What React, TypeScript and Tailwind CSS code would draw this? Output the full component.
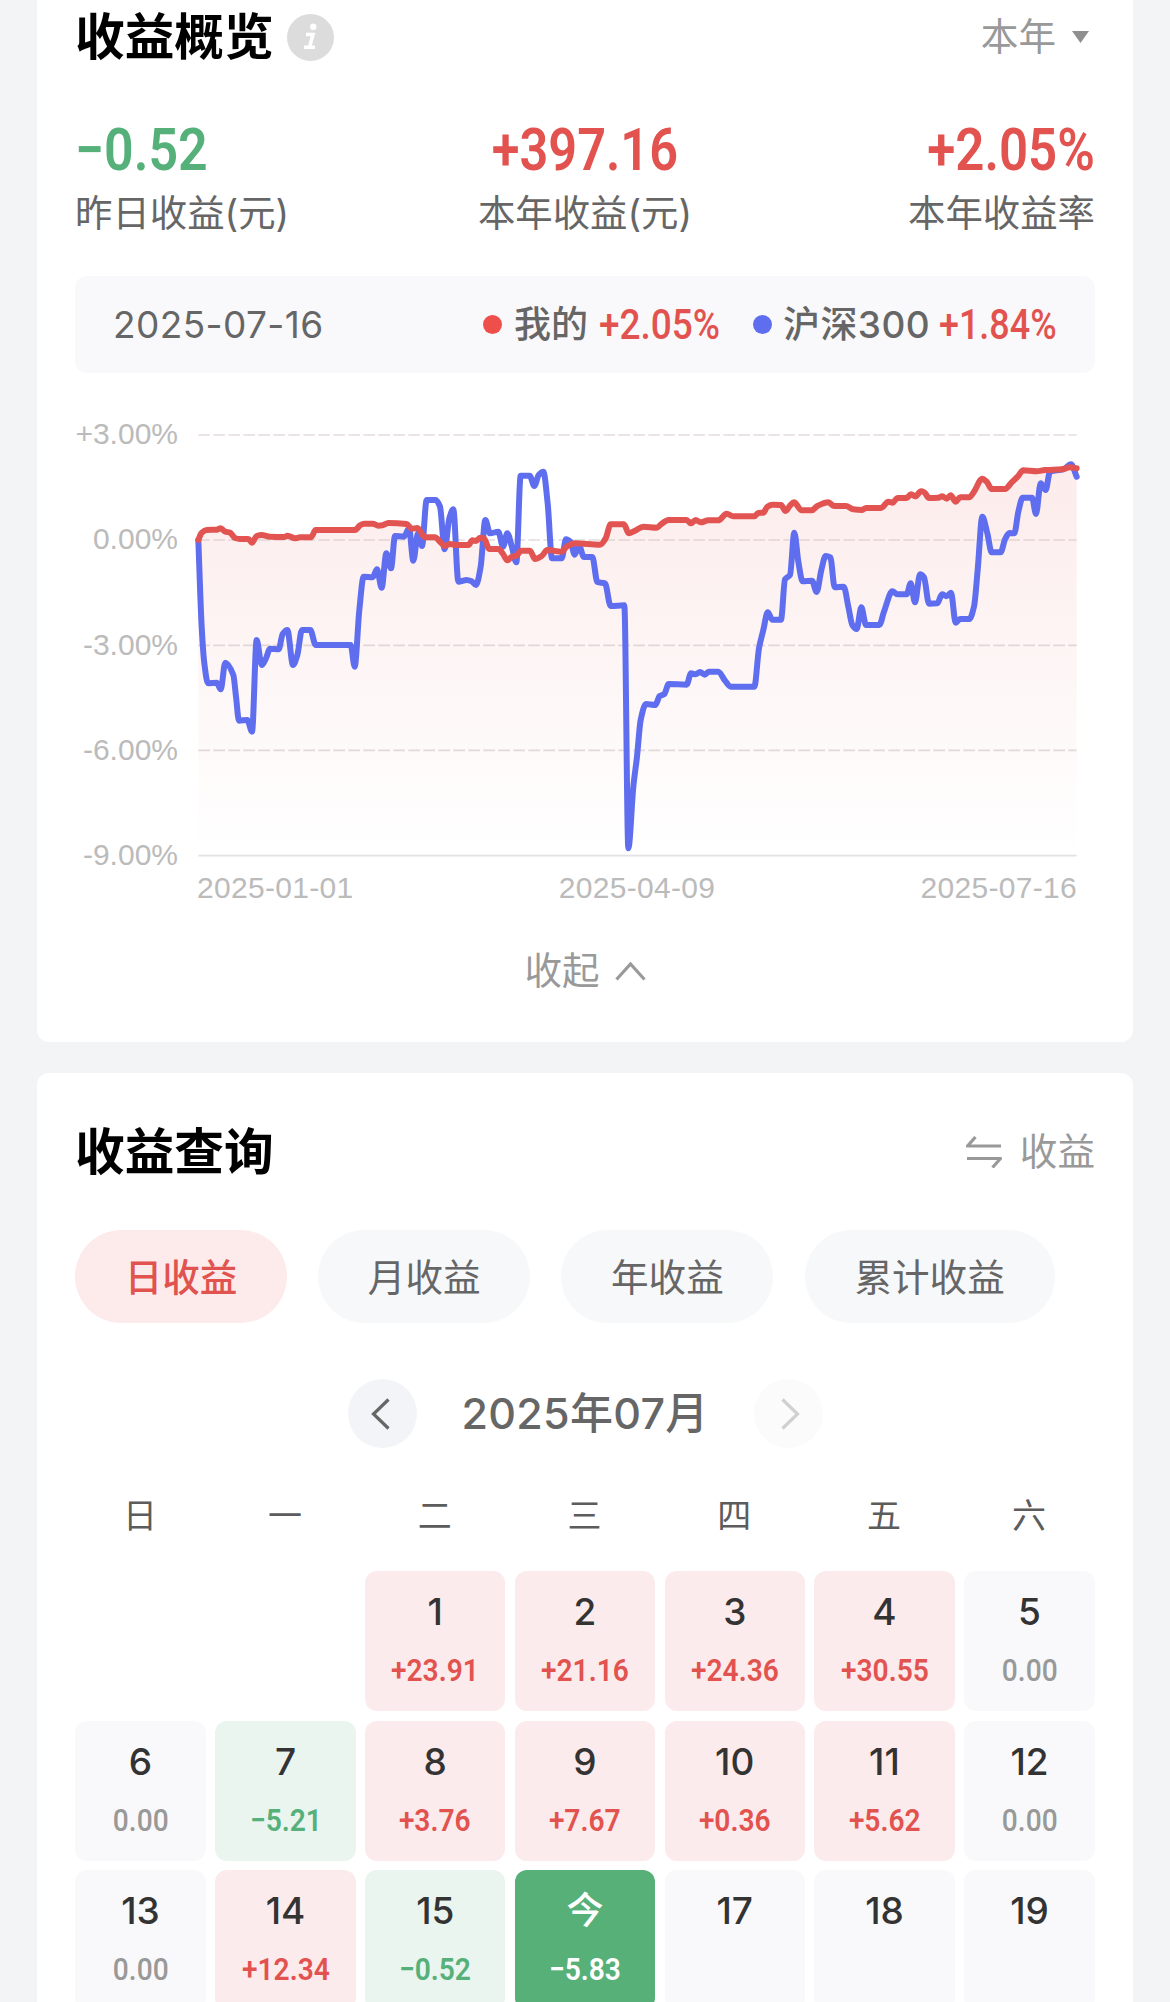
import clsx from 'clsx';

type Point = [number, number];

interface DayCell {
  label: string;
  amount?: string;
  today?: boolean;
}

const BENCHMARK: Point[] = [
  [415, 390], [425, 650], [433, 760], [444, 820], [470, 818], [482, 838], [496, 758], [520, 795], [528, 860], [537, 932],
  [562, 930], [576, 965], [590, 690], [605, 765], [618, 745], [630, 716], [656, 718], [668, 672], [682, 660], [699, 765],
  [712, 735], [726, 660], [751, 660], [767, 705], [872, 705], [884, 770], [898, 600], [911, 500], [938, 502], [951, 478],
  [965, 533], [979, 430], [993, 475], [1005, 378], [1032, 380], [1047, 355], [1060, 452], [1074, 370], [1086, 408],
  [1100, 270], [1127, 270], [1140, 290], [1154, 418], [1168, 325], [1180, 298], [1195, 515], [1220, 510], [1235, 514],
  [1248, 525], [1262, 470], [1276, 330], [1290, 370], [1315, 365], [1329, 410], [1342, 370], [1355, 408], [1369, 457],
  [1382, 197], [1409, 197], [1423, 228], [1436, 195], [1450, 185], [1463, 280], [1476, 445], [1505, 445], [1518, 388],
  [1532, 396], [1544, 434], [1557, 408], [1572, 441], [1597, 441], [1612, 516], [1635, 520], [1652, 588], [1693, 586],
  [1705, 1315], [1720, 1130], [1731, 1040], [1742, 930], [1758, 882], [1786, 885], [1799, 858], [1813, 852], [1826, 822],
  [1880, 824], [1893, 790], [1907, 793], [1920, 786], [1934, 794], [1947, 785], [1975, 785], [1995, 812], [2012, 830],
  [2083, 830], [2097, 715], [2110, 660], [2123, 607], [2137, 629], [2163, 629], [2175, 508], [2190, 495], [2203, 368],
  [2215, 455], [2228, 514], [2256, 512], [2270, 546], [2284, 480], [2297, 438], [2311, 442], [2324, 532], [2351, 530],
  [2365, 590], [2377, 645], [2390, 657], [2404, 592], [2418, 645], [2458, 645], [2472, 605], [2497, 544], [2512, 553],
  [2540, 553], [2552, 520], [2565, 577], [2580, 493], [2592, 502], [2607, 581], [2632, 580], [2646, 553], [2660, 559],
  [2673, 548], [2687, 638], [2700, 627], [2728, 627], [2742, 590], [2753, 480], [2767, 320], [2782, 370], [2795, 427],
  [2822, 427], [2835, 388], [2848, 369], [2863, 370], [2875, 305], [2888, 263], [2916, 263], [2928, 312], [2942, 220],
  [2957, 240], [2970, 185], [3010, 178], [3033, 163], [3050, 200],
];

const MINE: Point[] = [
  [415, 390], [425, 368], [440, 360], [470, 359], [482, 355], [496, 365], [510, 368], [525, 384], [540, 387], [565, 387],
  [576, 398], [590, 378], [605, 375], [630, 380], [672, 381], [683, 377], [705, 385], [720, 382], [753, 382], [767, 360],
  [885, 360], [900, 346], [912, 341], [938, 341], [955, 347], [967, 346], [985, 339], [1040, 342], [1055, 356],
  [1072, 354], [1095, 382], [1125, 382], [1140, 395], [1154, 408], [1170, 402], [1190, 405], [1225, 405], [1237, 391],
  [1248, 393], [1260, 383], [1272, 385], [1288, 417], [1315, 417], [1328, 430], [1342, 451], [1356, 440], [1370, 437],
  [1383, 422], [1410, 422], [1425, 447], [1445, 438], [1462, 420], [1505, 425], [1520, 410], [1545, 400], [1620, 404],
  [1637, 385], [1652, 343], [1692, 343], [1706, 370], [1725, 362], [1750, 350], [1790, 353], [1805, 341], [1826, 330],
  [1880, 330], [1893, 340], [1907, 330], [1922, 337], [1945, 331], [1975, 331], [2000, 311], [2020, 319], [2083, 319],
  [2095, 309], [2110, 308], [2122, 290], [2137, 284], [2163, 285], [2177, 303], [2190, 287], [2202, 277], [2225, 301],
  [2255, 301], [2272, 288], [2305, 277], [2323, 288], [2358, 288], [2380, 298], [2405, 300], [2418, 294], [2463, 294],
  [2485, 275], [2498, 278], [2512, 264], [2540, 264], [2553, 253], [2566, 259], [2583, 244], [2593, 247], [2607, 264],
  [2635, 263], [2647, 259], [2660, 266], [2672, 256], [2687, 275], [2700, 262], [2728, 262], [2742, 245], [2767, 206],
  [2780, 215], [2795, 237], [2835, 237], [2855, 217], [2873, 200], [2890, 181], [2930, 184], [2955, 180], [3005, 178],
  [3030, 172], [3050, 175],
];

// Cubic path that never overshoots between two neighbouring points
function monotonePath(points: Point[]) {
  const slopes = points.slice(1).map((p, i) => (p[1] - points[i][1]) / (p[0] - points[i][0]));
  const tangents = points.map((_, i) => {
    const a = slopes[i - 1];
    const b = slopes[i];
    if (a === undefined) return b;
    if (b === undefined) return a;
    return a * b <= 0 ? 0 : (2 * a * b) / (a + b);
  });
  return points.slice(1).reduce((d, [x, y], i) => {
    const [px, py] = points[i];
    const dx = (x - px) / 3;
    return `${d} C${px + dx},${py + tangents[i] * dx} ${x - dx},${y - tangents[i + 1] * dx} ${x},${y}`;
  }, `M${points[0][0]},${points[0][1]}`);
}

const Y_LABELS = ['+3.00%', '0.00%', '-3.00%', '-6.00%', '-9.00%'];
const GRID_LINES = [75, 390, 706, 1021];
const BASELINE = 1337;

const TABS = ['日收益', '月收益', '年收益', '累计收益'];
const WEEKDAYS = ['日', '一', '二', '三', '四', '五', '六'];

const DAYS: (DayCell | null)[] = [
  null,
  null,
  { label: '1', amount: '+23.91' },
  { label: '2', amount: '+21.16' },
  { label: '3', amount: '+24.36' },
  { label: '4', amount: '+30.55' },
  { label: '5', amount: '0.00' },
  { label: '6', amount: '0.00' },
  { label: '7', amount: '−5.21' },
  { label: '8', amount: '+3.76' },
  { label: '9', amount: '+7.67' },
  { label: '10', amount: '+0.36' },
  { label: '11', amount: '+5.62' },
  { label: '12', amount: '0.00' },
  { label: '13', amount: '0.00' },
  { label: '14', amount: '+12.34' },
  { label: '15', amount: '−0.52' },
  { label: '今', amount: '−5.83', today: true },
  { label: '17' },
  { label: '18' },
  { label: '19' },
];

function ProfitChart() {
  const line = monotonePath(MINE);
  return (
    <div>
      <div className="flex h-[451px] gap-3 font-['Liberation_Sans',sans-serif] text-[30px] text-[#bbbbbb]">
        <div className="flex w-[103px] flex-col justify-between text-right leading-[30px]">
          {Y_LABELS.map((label) => (
            <span key={label}>{label}</span>
          ))}
        </div>
        <svg className="h-[451px] w-[904px]" viewBox="390 27 2712 1353" fill="none">
          <defs>
            <linearGradient id="area" x1="0" y1="175" x2="0" y2={BASELINE} gradientUnits="userSpaceOnUse">
              <stop offset="0" stopColor="#e5504c" stopOpacity="0.11" />
              <stop offset="0.45" stopColor="#e5504c" stopOpacity="0.06" />
              <stop offset="1" stopColor="#e5504c" stopOpacity="0" />
            </linearGradient>
          </defs>
          <path d={`${line} V${BASELINE} H415 Z`} fill="url(#area)" />
          {GRID_LINES.map((y) => (
            <path key={y} d={`M415 ${y}H3050`} stroke="#c8b8bc" strokeOpacity="0.5" strokeWidth="5" strokeDasharray="35 10" />
          ))}
          <path d={`M415 ${BASELINE}H3050`} stroke="#e2e2e4" strokeWidth="5" />
          <g strokeWidth="18" strokeLinejoin="round" strokeLinecap="round">
            <path d={monotonePath(BENCHMARK)} stroke="#5f6eee" />
            <path d={line} stroke="#e25452" />
          </g>
        </svg>
      </div>
      <div className="mt-[1px] flex justify-between pr-[18px] pl-[122px] font-['Liberation_Sans',sans-serif] text-[30px] leading-[34px] tracking-[0.3px] text-[#bbbbbb]">
        <span>2025-01-01</span>
        <span>2025-04-09</span>
        <span>2025-07-16</span>
      </div>
    </div>
  );
}

function Overview() {
  return (
    <section className="h-[1042px] rounded-b-xl bg-white px-[38px]">
      <div className="flex h-[74px] items-center justify-between">
        <div className="flex items-center gap-[13px]">
          <h1 className="text-[49.7px] leading-[70px] font-bold text-black">收益概览</h1>
          <svg className="size-[47px]" viewBox="0 0 47 47">
            <circle cx="23.5" cy="23.5" r="23.5" fill="#dcdcdc" />
            <circle cx="26.3" cy="12.8" r="3.2" fill="#fff" />
            <path d="M19 20.5h7l-3.4 12.5M17 33.2h11" fill="none" stroke="#fff" strokeWidth="3.6" />
          </svg>
        </div>
        <div className="flex items-center gap-4 pr-[6px] text-[37.6px] text-[#999999]">
          本年
          <svg className="h-3 w-[17px]" viewBox="0 0 17 12">
            <path d="M0 0h17L8.500 12z" fill="#8f8f8f" />
          </svg>
        </div>
      </div>

      <div className="mt-[46px] grid grid-cols-3 text-[37.4px] leading-[48px] text-[#666666]">
        <div className="flex flex-col gap-[10px]">
          <span className="origin-left scale-x-[0.88] font-['Roboto',sans-serif] text-[59px] leading-[60px] font-semibold text-[#55b07a]">−0.52</span>
          <span>昨日收益(元)</span>
        </div>
        <div className="flex flex-col items-center gap-[10px]">
          <span className="scale-x-[0.855] font-['Roboto',sans-serif] text-[59px] leading-[60px] font-semibold text-[#e25350]">+397.16</span>
          <span>本年收益(元)</span>
        </div>
        <div className="flex flex-col items-end gap-[10px]">
          <span className="origin-right scale-x-[0.865] font-['Roboto',sans-serif] text-[59px] leading-[60px] font-semibold text-[#e25350]">+2.05%</span>
          <span>本年收益率</span>
        </div>
      </div>

      <div className="mt-[38px] flex h-[97px] items-center rounded-xl bg-[#f9f9fb] pl-[38px] text-[37px] text-[#666666]">
        <span className="w-[370px] tracking-[0.4px]">2025-07-16</span>
        <span className="size-[19px] rounded-full bg-[#ee4f4b]" />
        <span className="ml-[12px] w-[85px] font-medium">我的</span>
        <span className="w-[154px] origin-left scale-x-[0.86] font-['Roboto',sans-serif] text-[43px] font-medium text-[#e25350]">+2.05%</span>
        <span className="size-[19px] rounded-full bg-[#5f6eee]" />
        <span className="ml-[11px] w-[156px] font-medium tracking-[0.4px] whitespace-nowrap">沪深300</span>
        <span className="origin-left scale-x-[0.835] font-['Roboto',sans-serif] text-[43px] font-medium text-[#e25350]">+1.84%</span>
      </div>

      <div className="mt-[46px]">
        <ProfitChart />
      </div>

      <div className="mt-[41px] flex items-center justify-center gap-[15px] text-[37.6px] leading-[50px] text-[#999999]">
        收起
        <svg className="h-[19px] w-[31px]" viewBox="0 0 31 19" fill="none">
          <path d="M1.500 17.500L15.500 2L29.500 17.500" stroke="#999" strokeWidth="3.200" />
        </svg>
      </div>
    </section>
  );
}

function Calendar() {
  return (
    <div className="grid grid-cols-[131px_repeat(5,minmax(0,1fr))_131px] gap-x-[9.3px] gap-y-[9.4px]">
      {WEEKDAYS.map((day) => (
        <span key={day} className="h-[71px] pr-[1px] text-center text-[34px] leading-[50px] text-[#5c5c5c]">
          {day}
        </span>
      ))}
      {DAYS.map((day, idx) => {
        if (!day) return <span key={idx} />;
        const gain = day.amount?.startsWith('+');
        const loss = day.amount?.startsWith('−');
        return (
          <div
            key={idx}
            className={clsx(
              'flex h-[140px] flex-col items-center rounded-xl pt-[17px]',
              day.today ? 'bg-[#56b078] text-white' : 'text-[#333333]',
              !day.today && gain && 'bg-[#fcebec]',
              !day.today && loss && 'bg-[#eaf5ef]',
              !gain && !loss && 'bg-[#f9f9fb]',
            )}
          >
            <span className="text-[37px] leading-[48px] font-medium">{day.label}</span>
            <span
              className={clsx(
                "mt-[14px] scale-x-[0.88] font-['Roboto',sans-serif] text-[32px] leading-[40px]",
                gain || loss ? 'font-semibold' : 'font-medium text-[#999999]',
                gain && 'text-[#e25350]',
                loss && !day.today && 'text-[#55b07a]',
              )}
            >
              {day.amount}
            </span>
          </div>
        );
      })}
    </div>
  );
}

function Query() {
  return (
    <section className="mt-[31px] h-[1000px] rounded-t-xl bg-white px-[38px] pt-[43px]">
      <div className="flex h-[72px] items-center justify-between">
        <h2 className="text-[49.7px] leading-[70px] font-bold text-black">收益查询</h2>
        <div className="flex items-center gap-[18px] text-[37.6px] text-[#999999]">
          <svg className="h-8 w-9" viewBox="0 0 36 32" fill="none" stroke="#999" strokeWidth="3.200" strokeLinejoin="round">
            <path d="M35 10H1.500L9.500 1M1 22.500H34.500L26.500 31.500" />
          </svg>
          收益
        </div>
      </div>

      <div className="mt-[42px] flex gap-[31.200px] text-[37.6px]">
        {TABS.map((tab, i) => (
          <button
            key={tab}
            className={clsx(
              'h-[93px] rounded-full pt-1',
              i === TABS.length - 1 ? 'w-[250px]' : 'w-[212px]',
              i === 0 ? 'bg-[#fdebeb] font-medium text-[#e0534f]' : 'bg-[#f7f8fa] text-[#666666]',
            )}
          >
            {tab}
          </button>
        ))}
      </div>

      <div className="mt-14 flex items-center justify-center text-[43px] font-medium text-[#666666]">
        <span className="flex size-[69px] items-center justify-center rounded-full bg-[#f3f4f7]">
          <svg className="mr-1 h-8 w-[19px]" viewBox="0 0 19 32" fill="none">
            <path d="M17.500 1.500L2.500 16L17.500 30.500" stroke="#666" strokeWidth="3.200" />
          </svg>
        </span>
        <span className="w-[337px] text-center leading-[69px] tracking-[0.3px]">2025年07月</span>
        <span className="flex size-[69px] items-center justify-center rounded-full bg-[#fbfbfc]">
          <svg className="ml-1 h-8 w-[19px]" viewBox="0 0 19 32" fill="none">
            <path d="M1.500 1.500L16.500 16L1.500 30.500" stroke="#d0d0d0" strokeWidth="3.200" />
          </svg>
        </span>
      </div>

      <div className="mt-[43px]">
        <Calendar />
      </div>
    </section>
  );
}

export default function App() {
  return (
    <div
      lang="zh-CN"
      className="h-[2002px] overflow-hidden bg-[#f3f4f6] px-[37px] font-['Inter','Noto_Sans_CJK_SC',sans-serif]"
    >
      <Overview />
      <Query />
    </div>
  );
}
